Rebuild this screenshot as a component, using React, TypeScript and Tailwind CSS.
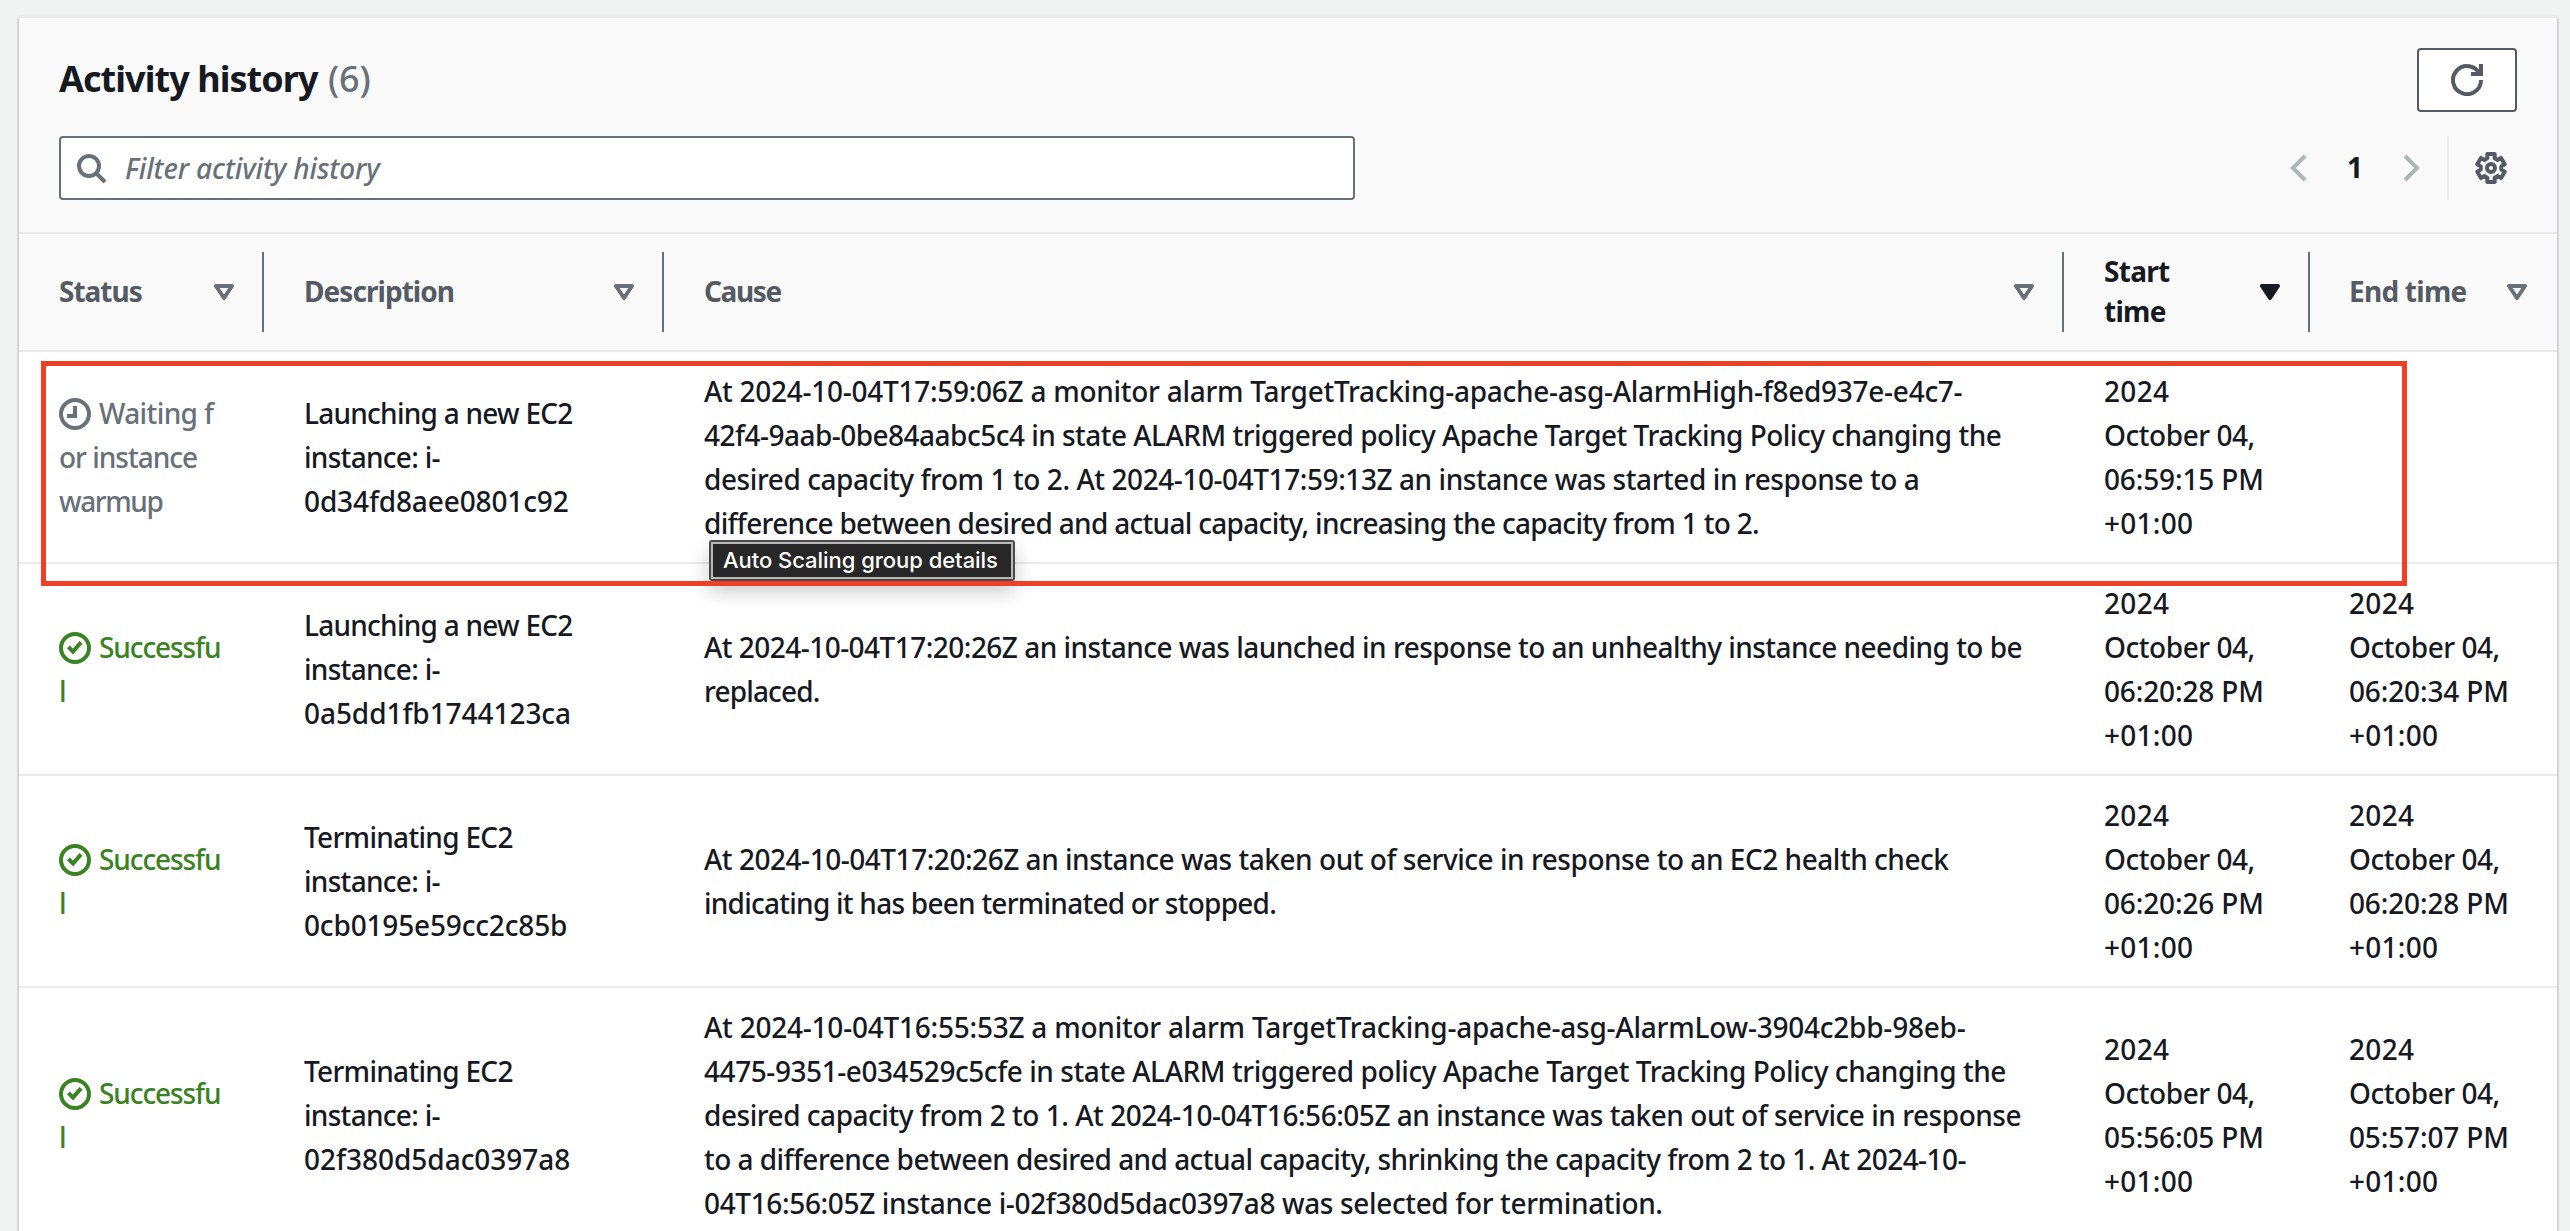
import type { ReactNode } from "react";

type Line = [text: string, tracking: string];

interface Activity {
  status: "waiting" | "success";
  description: Line[];
  cause: Line[];
  start: Line[];
  end: Line[];
}

const when = (time: string): Line[] => [
  ["2024", "tracking-[0.3px]"],
  ["October 04,", "tracking-[-0.45px]"],
  [`${time} PM`, "tracking-[-0.15px]"],
  ["+01:00", "tracking-[0.25px]"],
];

const activities: Activity[] = [
  {
    status: "waiting",
    description: [
      ["Launching a new EC2", "tracking-[-0.75px]"],
      ["instance: i-", "tracking-[-0.7px]"],
      ["0d34fd8aee0801c92", "tracking-[-0.13px]"],
    ],
    cause: [
      ["At 2024-10-04T17:59:06Z a monitor alarm TargetTracking-apache-asg-AlarmHigh-f8ed937e-e4c7-", "tracking-[-0.27px]"],
      ["42f4-9aab-0be84aabc5c4 in state ALARM triggered policy Apache Target Tracking Policy changing the", "tracking-[-0.52px]"],
      ["desired capacity from 1 to 2. At 2024-10-04T17:59:13Z an instance was started in response to a", "tracking-[-0.43px]"],
      ["difference between desired and actual capacity, increasing the capacity from 1 to 2.", "tracking-[-0.69px]"],
    ],
    start: when("06:59:15"),
    end: [],
  },
  {
    status: "success",
    description: [
      ["Launching a new EC2", "tracking-[-0.75px]"],
      ["instance: i-", "tracking-[-0.7px]"],
      ["0a5dd1fb1744123ca", "tracking-[-0.06px]"],
    ],
    cause: [
      ["At 2024-10-04T17:20:26Z an instance was launched in response to an unhealthy instance needing to be", "tracking-[-0.53px]"],
      ["replaced.", "tracking-[-0.85px]"],
    ],
    start: when("06:20:28"),
    end: when("06:20:34"),
  },
  {
    status: "success",
    description: [
      ["Terminating EC2", "tracking-[-0.7px]"],
      ["instance: i-", "tracking-[-0.7px]"],
      ["0cb0195e59cc2c85b", "tracking-[-0.16px]"],
    ],
    cause: [
      ["At 2024-10-04T17:20:26Z an instance was taken out of service in response to an EC2 health check", "tracking-[-0.47px]"],
      ["indicating it has been terminated or stopped.", "tracking-[-0.75px]"],
    ],
    start: when("06:20:26"),
    end: when("06:20:28"),
  },
  {
    status: "success",
    description: [
      ["Terminating EC2", "tracking-[-0.7px]"],
      ["instance: i-", "tracking-[-0.7px]"],
      ["02f380d5dac0397a8", "tracking-[-0.02px]"],
    ],
    cause: [
      ["At 2024-10-04T16:55:53Z a monitor alarm TargetTracking-apache-asg-AlarmLow-3904c2bb-98eb-", "tracking-[-0.23px]"],
      ["4475-9351-e034529c5cfe in state ALARM triggered policy Apache Target Tracking Policy changing the", "tracking-[-0.43px]"],
      ["desired capacity from 2 to 1. At 2024-10-04T16:56:05Z an instance was taken out of service in response", "tracking-[-0.47px]"],
      ["to a difference between desired and actual capacity, shrinking the capacity from 2 to 1. At 2024-10-", "tracking-[-0.55px]"],
      ["04T16:56:05Z instance i-02f380d5dac0397a8 was selected for termination.", "tracking-[-0.36px]"],
    ],
    start: when("05:56:05"),
    end: when("05:57:07"),
  },
];

function Icon({ children, className = "" }: { children: ReactNode; className?: string }) {
  return (
    <svg viewBox="0 0 16 16" fill="none" stroke="currentColor" strokeWidth="2" className={`size-8 shrink-0 ${className}`}>
      {children}
    </svg>
  );
}

function Caret({ filled = false }: { filled?: boolean }) {
  return (
    <svg
      viewBox="3 4 10 8"
      fill={filled ? "currentColor" : "none"}
      stroke="currentColor"
      strokeWidth="2"
      strokeLinejoin="round"
      className={`h-4 w-5 shrink-0 ${filled ? "text-[#16191f]" : "text-[#687078]"}`}
    >
      <path d="M4 5h8l-4 6-4-6Z" />
    </svg>
  );
}

function HeaderCell({ children, sorted = false, divider = true }: { children: ReactNode; sorted?: boolean; divider?: boolean }) {
  return (
    <div className="flex items-center">
      <div
        className={`flex h-20 flex-1 items-center justify-between border-r-2 pl-10 pr-7 font-bold leading-10 ${
          divider ? "border-[#687078]" : "border-transparent"
        } ${sorted ? "text-[#16191f]" : "text-[#545b64]"}`}
      >
        <div className="pb-0.5">{children}</div>
        <Caret filled={sorted} />
      </div>
    </div>
  );
}

function Lines({ lines }: { lines: Line[] }) {
  return (
    <div className="whitespace-nowrap pl-10">
      {lines.map(([text, tracking]) => (
        <div key={text} className={tracking}>
          {text}
        </div>
      ))}
    </div>
  );
}

function Status({ kind }: { kind: Activity["status"] }) {
  if (kind === "waiting") {
    return (
      <div className="whitespace-nowrap pl-10 text-[#687078]">
        <div className="tracking-[-0.6px]">
          <Icon className="mr-2 inline-block align-[-6px]">
            <circle cx="8" cy="8" r="7" />
            <path d="M8 4v5H4" />
          </Icon>
          Waiting f
        </div>
        <div className="tracking-[-1px]">or instance</div>
        <div className="tracking-[-1.4px]">warmup</div>
      </div>
    );
  }
  return (
    <div className="whitespace-nowrap pl-10 text-[#3b8223]">
      <div className="tracking-[-1.1px]">
        <Icon className="mr-2 inline-block align-[-6px]">
          <circle cx="8" cy="8" r="7" />
          <path d="M4.7 7.4 7 9.8l4-4.6" />
        </Icon>
        Successfu
      </div>
      <div>l</div>
    </div>
  );
}

export default function App() {
  return (
    <div className="h-[1231px] w-full overflow-hidden bg-[#f1f3f3] pl-[19px] pr-[13px] pt-4 font-['Noto_Sans',sans-serif] text-[28px] font-medium leading-[44px] text-[#16191f]">
      <div className="border-t-2 border-[#ebebeb] bg-white shadow-[0_2px_3px_0_rgba(0,28,36,0.45)]">
        <header className="border-b-2 border-[#ebebeb] bg-[#fafafa] pb-8 pl-10 pr-10 pt-[30px]">
          <div className="flex items-center justify-between">
            <h1 className="pb-0.5 text-[36px] font-bold tracking-[-0.95px]">
              Activity history <span className="ml-0.5 font-medium tracking-[-0.2px] text-[#687078]">(6)</span>
            </h1>
            <button className="flex h-16 w-[100px] items-center justify-center rounded border-2 border-[#545b64] bg-white text-[#545b64]">
              <Icon>
                <path d="M10 5h5V0" />
                <path d="M15 8a7 7 0 1 1-.7-3" />
              </Icon>
            </button>
          </div>
          <div className="mt-6 flex h-16 items-center justify-between">
            <div className="flex h-16 w-[1296px] items-center rounded border-2 border-[#687078] bg-white pl-3.5 text-[#687078]">
              <Icon>
                <circle cx="7" cy="7" r="5" />
                <path d="m15 15-4.5-4.5" />
              </Icon>
              <span className="pl-[18px] font-medium italic tracking-[-0.12px]">Filter activity history</span>
            </div>
            <div className="flex h-16 items-center pr-2.5">
              <Icon className="text-[#aab7b8]">
                <path d="M11 2 5 8l6 6" />
              </Icon>
              <span className="w-20 pb-0.5 text-center font-bold">1</span>
              <Icon className="text-[#aab7b8]">
                <path d="m5 2 6 6-6 6" />
              </Icon>
              <span className="ml-5 mr-[26px] h-16 w-0.5 bg-[#ebebeb]" />
              <Icon className="text-[#545b64]">
                <circle cx="8" cy="8" r="2" />
                <path
                  strokeLinejoin="round"
                  d="M6.15 1h3.7v2.15l1.42.81 1.75-.98 1.84 3.18-1.72 1.03v1.62l1.72 1.03-1.84 3.18-1.75-.98-1.42.81V15h-3.7v-2.15l-1.42-.81-1.75.98-1.84-3.18 1.72-1.03V7.19L1.14 6.16l1.84-3.18 1.75.98 1.42-.81Z"
                />
              </Icon>
            </div>
          </div>
        </header>

        <div className="grid h-[118px] grid-cols-[245px_400px_1400px_246px_247px] border-b-2 border-[#ebebeb] bg-[#fafafa]">
          <HeaderCell><span className="tracking-[-1px]">Status</span></HeaderCell>
          <HeaderCell><span className="tracking-[-0.95px]">Description</span></HeaderCell>
          <HeaderCell><span className="tracking-[-1.4px]">Cause</span></HeaderCell>
          <HeaderCell sorted>
            <span className="tracking-[-0.7px]">Start<br />time</span>
          </HeaderCell>
          <HeaderCell divider={false}><span className="-ml-px tracking-[-0.75px]">End time</span></HeaderCell>
        </div>

        {activities.map((a, i) => (
          <div
            key={i}
            className="relative grid grid-cols-[245px_400px_1400px_245px_248px] items-center border-b-2 border-[#ebebeb] pb-[17px] pt-[17px]"
          >
            <Status kind={a.status} />
            <Lines lines={a.description} />
            <Lines lines={a.cause} />
            <Lines lines={a.start} />
            <Lines lines={a.end} />
            {i === 0 && (
              <>
                <div className="absolute left-[690px] top-[188px] z-10 rounded-[3px] border-2 border-[#4a4a4a] shadow-[0_10px_20px_rgba(0,0,0,0.22)]">
                  <div className="flex h-[37px] w-[302px] items-center whitespace-nowrap border-2 border-[#b8b8b8] bg-[#272727] pb-px pl-2.5 font-['Inter',sans-serif] text-[22px] leading-none tracking-[-0.04px] text-white">
                    Auto Scaling group details
                  </div>
                </div>
                <div className="pointer-events-none absolute left-[22px] top-[9px] z-20 h-[225px] w-[2366px] border-[5px] border-[#ee4026]" />
              </>
            )}
          </div>
        ))}
      </div>
    </div>
  );
}
